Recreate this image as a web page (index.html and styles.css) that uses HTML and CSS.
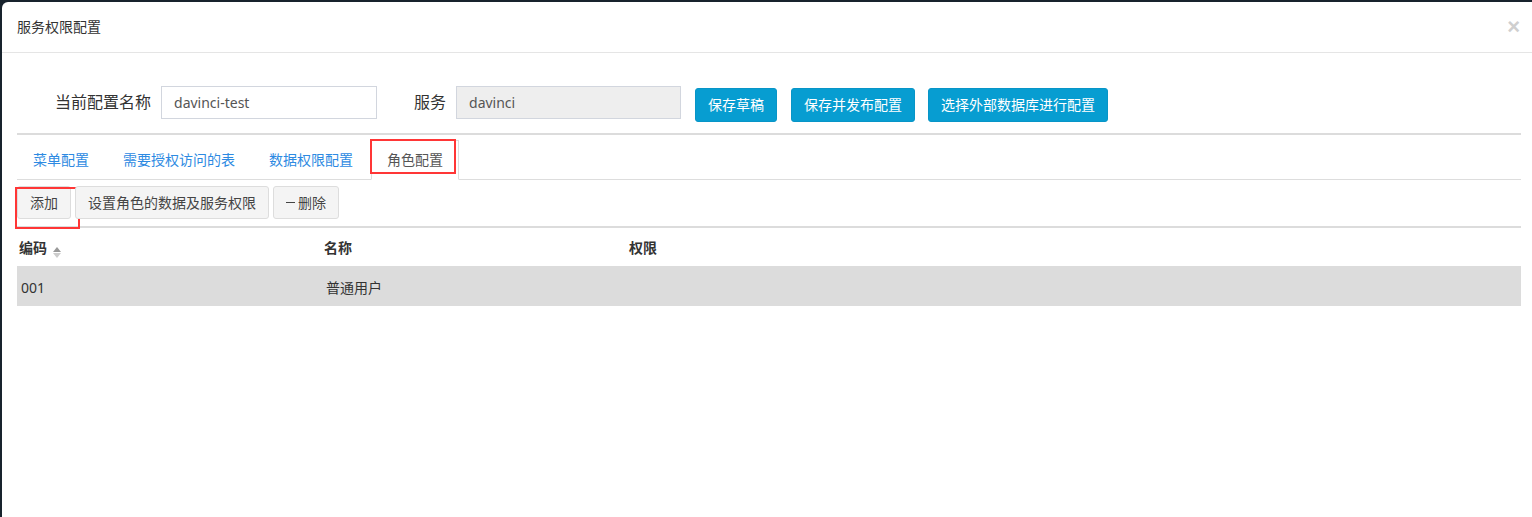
FILE: index.html
```html
<!DOCTYPE html>
<html lang="zh">
<head>
<meta charset="utf-8">
<title>服务权限配置</title>
<link rel="stylesheet" href="styles.css">
</head>
<body>
<div class="modal">
  <div class="modal-header">
    <h4 class="modal-title">服务权限配置</h4>
    <span class="close">×</span>
  </div>
  <div class="modal-body">
    <div class="form-row">
      <label class="form-label">当前配置名称</label>
      <div class="input input-name">davinci-test</div>
      <label class="form-label label-service">服务</label>
      <div class="input input-disabled">davinci</div>
      <button class="btn-primary">保存草稿</button>
      <button class="btn-primary btn-gap">保存并发布配置</button>
      <button class="btn-primary">选择外部数据库进行配置</button>
    </div>
    <div class="divider"></div>
    <div class="tabs">
      <div class="tab">菜单配置</div>
      <div class="tab">需要授权访问的表</div>
      <div class="tab">数据权限配置</div>
      <div class="tab tab-active">角色配置<span class="mark mark-tab"></span></div>
    </div>
    <div class="toolbar">
      <button class="btn-default btn-add">添加<span class="mark mark-add"></span></button>
      <button class="btn-default">设置角色的数据及服务权限</button>
      <button class="btn-default"><span class="minus"></span>删除</button>
    </div>
    <div class="divider"></div>
    <table class="grid">
      <thead>
        <tr>
          <th class="col-code">编码<span class="sort"><span class="sort-up"></span><span class="sort-down"></span></span></th>
          <th class="col-name">名称</th>
          <th>权限</th>
        </tr>
      </thead>
      <tbody>
        <tr class="selected">
          <td>001</td>
          <td>普通用户</td>
          <td></td>
        </tr>
      </tbody>
    </table>
  </div>
</div>
</body>
</html>
```

FILE: styles.css
```css
html, body {
  margin: 0;
  padding: 0;
}
body {
  background: #18232d;
  font-family: "Noto Sans", "Noto Sans CJK SC", sans-serif;
  font-size: 14px;
  color: #333;
  overflow: hidden;
}
.modal {
  margin: 2px 0 0 2px;
  height: 515px;
  background: #fff;
  border-radius: 6px 0 0 0;
}
.modal-header {
  height: 50px;
  border-bottom: 1px solid #e5e5e5;
  display: flex;
  align-items: center;
  justify-content: space-between;
  padding: 0 12px 0 15px;
}
.modal-title {
  margin: 0;
  font-size: 14px;
  font-weight: normal;
  color: #333;
  line-height: 20px;
}
.close {
  font-family: "Liberation Sans", sans-serif;
  font-size: 22px;
  line-height: 20px;
  color: #cfcfcf;
  font-weight: bold;
}
.modal-body {
  padding: 0 11px 0 15px;
}
.form-row {
  display: flex;
  align-items: flex-start;
  padding: 33px 0 0 38px;
  margin-bottom: 11px;
}
.form-label {
  font-size: 16px;
  line-height: 33px;
  color: #333;
  margin-right: 10px;
}
.label-service {
  margin-left: 37px;
  margin-right: 10px;
}
.input {
  box-sizing: border-box;
  height: 33px;
  border: 1px solid #d2d6de;
  padding: 0 12px;
  line-height: 31px;
  color: #555;
  font-size: 14px;
}
.input-name {
  width: 216px;
}
.input-disabled {
  width: 225px;
  background: #eee;
  margin-right: 14px;
}
.btn-primary {
  box-sizing: border-box;
  height: 34px;
  margin-top: 2px;
  margin-right: 14px;
  padding: 0 12px;
  border: 1px solid #0895c7;
  border-radius: 3px;
  background: #079dd1;
  color: #fff;
  font-family: inherit;
  font-size: 14px;
  line-height: 32px;
}
.btn-gap {
  margin-right: 13px;
}
.divider {
  height: 2px;
  background: #dcdcdc;
}
.tabs {
  display: flex;
  margin-top: 5px;
  border-bottom: 1px solid #ddd;
}
.tab {
  position: relative;
  box-sizing: border-box;
  height: 40px;
  padding: 9px 15px;
  margin-right: 2px;
  margin-bottom: -1px;
  border: 1px solid transparent;
  line-height: 20px;
  color: #2d8ae2;
  font-size: 14px;
}
.tab-active {
  color: #555;
  border-color: #ddd;
  border-bottom-color: #fff;
  background: #fff;
}
.mark {
  position: absolute;
  border: 2px solid #ff3636;
  pointer-events: none;
}
.mark-tab {
  left: -2px;
  top: -2px;
  width: 82px;
  height: 31px;
}
.toolbar {
  display: flex;
  gap: 4px;
  padding-top: 6px;
  margin-bottom: 7px;
}
.btn-default {
  position: relative;
  box-sizing: border-box;
  height: 33px;
  padding: 0 12px;
  border: 1px solid #ddd;
  border-radius: 3px;
  background: #f4f4f4;
  color: #444;
  font-family: inherit;
  font-size: 14px;
  line-height: 31px;
  display: flex;
  align-items: center;
}
.mark-add {
  left: -3px;
  top: 0;
  width: 61px;
  height: 38px;
}
.minus {
  display: inline-block;
  width: 9px;
  height: 1px;
  background: #444;
  margin-right: 3px;
}
.grid {
  width: 100%;
  border-collapse: collapse;
}
.grid th {
  text-align: left;
  font-weight: bold;
  height: 38px;
  padding: 0 2px;
  border-bottom: 2px solid #dcdcdc;
  color: #333;
  font-size: 14px;
  vertical-align: middle;
}
.col-code, .col-name {
  width: 301px;
}
.grid td {
  height: 38px;
  padding: 0 4px;
  color: #333;
  font-size: 14px;
}
.selected td {
  background: #dcdcdc;
}
.sort {
  display: inline-flex;
  flex-direction: column;
  gap: 1px;
  margin-left: 6px;
  vertical-align: 1px;
}
.sort-up {
  width: 0;
  height: 0;
  border-left: 4px solid transparent;
  border-right: 4px solid transparent;
  border-bottom: 5px solid #999;
}
.sort-down {
  width: 0;
  height: 0;
  border-left: 4px solid transparent;
  border-right: 4px solid transparent;
  border-top: 5px solid #ccc;
}
```
